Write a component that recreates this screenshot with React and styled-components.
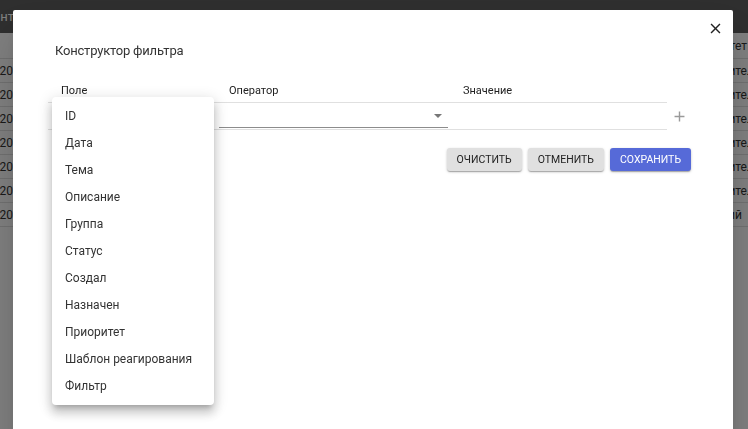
import React from 'react';
import styled, { createGlobalStyle } from 'styled-components';

const GlobalStyle = createGlobalStyle`
   html, body {
      margin: 0;
      padding: 0;
      overflow: hidden;
      background: #fff;
      font-family: Roboto, "Liberation Sans", Arial, sans-serif;
   }
   * { box-sizing: border-box; }
`;

const Page = styled.div`
   width: 100vw;
   height: 100vh;
   background: #fff;
`;

const TopBar = styled.div`
   height: 33px;
   background: #5e5e5e;
   display: flex;
   align-items: center;
   color: #fff;
   font-size: 13px;
   white-space: nowrap;
   overflow: hidden;
`;

const BarTitle = styled.span`
   margin-left: -9px;
`;

const TableRow = styled.div`
   display: flex;
   align-items: center;
   height: ${({ isHead }) => (isHead ? '26px' : '24px')};
   border-bottom: 1px solid #e0e0e0;
   font-size: 12px;
   color: #333;
   white-space: nowrap;
`;

const DateCell = styled.div`
   width: 13px;
   overflow: hidden;
   display: flex;
   justify-content: flex-end;
`;

const Spacer = styled.div`
   flex: 1;
`;

const SideCell = styled.div`
   width: ${({ width }) => width}px;
   overflow: visible;
`;

const Backdrop = styled.div`
   position: fixed;
   inset: 0;
   background: rgba(0, 0, 0, 0.5);
`;

const Dialog = styled.div`
   position: fixed;
   left: 13px;
   top: 10px;
   width: 720px;
   bottom: -20px;
   background: #fff;
   border-radius: 2px;
   box-shadow: 0 11px 15px -7px rgba(0, 0, 0, 0.2), 0 24px 38px 3px rgba(0, 0, 0, 0.14);
   padding: 31px 0 0 35px;
`;

const CloseButton = styled.button`
   position: absolute;
   top: 9.5px;
   right: 9.5px;
   width: 17px;
   height: 17px;
   padding: 0;
   border: none;
   background: none;
   display: flex;
   color: #222;
`;

const Title = styled.h2`
   margin: 0 0 0 7px;
   font-size: 13px;
   letter-spacing: -0.2px;
   line-height: 20px;
   font-weight: 400;
   color: #333;
`;

const Builder = styled.div`
   position: relative;
   margin-top: 18px;
`;

const Columns = styled.div`
   display: grid;
   grid-template-columns: 171px 229px 219px;
`;

const HeadRow = styled(Columns)`
   height: 23px;
   align-items: center;
`;

const Label = styled.div`
   font-size: 11px;
   color: #222;
   padding-left: ${({ indent }) => indent}px;
`;

const ConditionLine = styled.div`
   display: flex;
   align-items: center;
`;

const ConditionRow = styled(Columns)`
   height: 28px;
   border-top: 1px solid #e0e0e0;
   border-bottom: 1px solid #e0e0e0;
`;

const Select = styled.div`
   position: relative;
   height: 25px;
   border-bottom: 1px solid #8c8c8c;
`;

const Arrow = styled.span`
   position: absolute;
   right: 6px;
   top: 11px;
   width: 0;
   height: 0;
   border-left: 4px solid transparent;
   border-right: 4px solid transparent;
   border-top: 4px solid #777;
`;

const AddButton = styled.button`
   margin-left: 3.5px;
   width: 17px;
   height: 17px;
   padding: 0;
   border: none;
   background: none;
   display: flex;
   color: #9a9a9a;
`;

const Menu = styled.ul`
   position: absolute;
   left: 4px;
   top: 18px;
   width: 162px;
   margin: 0;
   padding: 5px 0 6px;
   list-style: none;
   background: #fff;
   border-radius: 4px;
   box-shadow: 0 5px 5px -3px rgba(0, 0, 0, 0.2), 0 8px 10px 1px rgba(0, 0, 0, 0.14),
      0 3px 14px 2px rgba(0, 0, 0, 0.12);
`;

const MenuItem = styled.li`
   height: 27px;
   display: flex;
   align-items: center;
   padding-left: 13px;
   font-size: 12px;
   color: #333;
   white-space: nowrap;
`;

const Actions = styled.div`
   width: 643px;
   margin-top: 18px;
   display: flex;
   justify-content: flex-end;
   gap: 6px;
`;

const Button = styled.button`
   height: 23px;
   padding: 0 10px;
   border: none;
   border-radius: 3px;
   font-family: Roboto, "Liberation Sans", Arial, sans-serif;
   font-size: 10.5px;
   text-transform: uppercase;
   color: ${({ primary }) => (primary ? '#fff' : '#222')};
   background: ${({ primary }) => (primary ? '#566ad8' : '#e0e0e0')};
   box-shadow: 0 1px 3px rgba(0, 0, 0, 0.2), 0 1px 1px rgba(0, 0, 0, 0.14),
      0 2px 1px -1px rgba(0, 0, 0, 0.12);
`;

const rows = [
   { date: '01.07.2020', side: 'Исполнитель', width: 62 },
   { date: '02.07.2020', side: 'Исполнитель', width: 62 },
   { date: '03.07.2020', side: 'Исполнитель', width: 62 },
   { date: '06.07.2020', side: 'Исполнитель', width: 62 },
   { date: '07.07.2020', side: 'Исполнитель', width: 62 },
   { date: '08.07.2020', side: 'Исполнитель', width: 62 },
   { date: '09.07.2020', side: 'Текущий', width: 55 },
];

const fields = [
   'ID',
   'Дата',
   'Тема',
   'Описание',
   'Группа',
   'Статус',
   'Создал',
   'Назначен',
   'Приоритет',
   'Шаблон реагирования',
   'Фильтр',
];

const App = () => (
   <Page>
      <GlobalStyle />
      <TopBar>
         <BarTitle>Интерфейс</BarTitle>
      </TopBar>
      <TableRow isHead>
         <DateCell />
         <Spacer />
         <SideCell width={61}>Приоритет</SideCell>
      </TableRow>
      {rows.map((r) => (
         <TableRow key={r.date}>
            <DateCell>{r.date}</DateCell>
            <Spacer />
            <SideCell width={r.width}>{r.side}</SideCell>
         </TableRow>
      ))}

      <Backdrop />
      <Dialog>
         <CloseButton aria-label="Закрыть">
            <svg width="17" height="17" viewBox="0 0 24 24" fill="currentColor">
               <path d="M19 6.41L17.59 5 12 10.59 6.41 5 5 6.41 10.59 12 5 17.59 6.41 19 12 13.41 17.59 19 19 17.59 13.41 12z" />
            </svg>
         </CloseButton>
         <Title>Конструктор фильтра</Title>
         <Builder>
            <HeadRow>
               <Label indent={13}>Поле</Label>
               <Label indent={10}>Оператор</Label>
               <Label indent={15}>Значение</Label>
            </HeadRow>
            <ConditionLine>
               <ConditionRow>
                  <div />
                  <Select>
                     <Arrow />
                  </Select>
                  <div />
               </ConditionRow>
               <AddButton aria-label="Добавить">
                  <svg width="17" height="17" viewBox="0 0 24 24" fill="currentColor">
                     <path d="M19 13h-6v6h-2v-6H5v-2h6V5h2v6h6v2z" />
                  </svg>
               </AddButton>
            </ConditionLine>
            <Menu>
               {fields.map((f) => (
                  <MenuItem key={f}>{f}</MenuItem>
               ))}
            </Menu>
         </Builder>
         <Actions>
            <Button>Очистить</Button>
            <Button>Отменить</Button>
            <Button primary>Сохранить</Button>
         </Actions>
      </Dialog>
   </Page>
);

export default App;
